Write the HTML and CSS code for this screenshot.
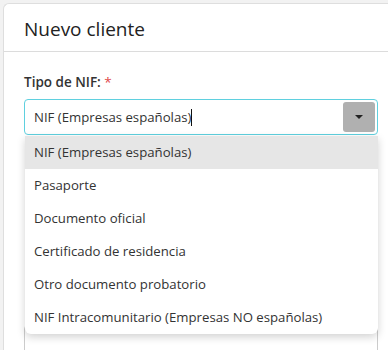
FILE: index.html
```html
<!DOCTYPE html>
<html lang="es">
<head>
    <meta charset="UTF-8">
    <meta name="viewport" content="width=device-width, initial-scale=1.0">
    <title>Nuevo cliente</title>
    <link rel="stylesheet" href="styles.css">
</head>
<body>
    <div class="card">
        <div class="card-header">Nuevo cliente</div>
        <div class="card-body">
            <label class="field-label">Tipo de NIF: <span class="req">*</span></label>
            <div class="select-wrap">
                <div class="select-box">
                    <span class="select-value">NIF (Empresas españolas)</span><span class="caret-cursor"></span>
                    <span class="select-btn">
                        <svg width="10" height="6" viewBox="0 0 10 6"><path d="M1 1h8L5 5z" fill="#222"/></svg>
                    </span>
                </div>
                <ul class="select-menu">
                    <li class="active">NIF (Empresas españolas)</li>
                    <li>Pasaporte</li>
                    <li>Documento oficial</li>
                    <li>Certificado de residencia</li>
                    <li>Otro documento probatorio</li>
                    <li>NIF Intracomunitario (Empresas NO españolas)</li>
                </ul>
            </div>
            <div class="next-input"></div>
        </div>
    </div>
</body>
</html>
```

FILE: styles.css
```css
body {
    margin: 0;
    padding: 3px 0 0 3px;
    background: #f2f2f2;
    font-family: "Open Sans", "Noto Sans", sans-serif;
    color: #212529;
    overflow: hidden;
}
.card {
    background: #fff;
    border: 1px solid #dedede;
    border-right: none;
    border-radius: 6px 0 0 0;
    height: 400px;
}
.card-header {
    height: 48px;
    box-sizing: border-box;
    padding: 12px 20px 0;
    font-size: 19px;
    color: #222;
    border-bottom: 1px solid #dcdcdc;
}
.card-body {
    padding: 21px 10px 0 20px;
}
.field-label {
    display: block;
    font-size: 13.5px;
    font-weight: 600;
    color: #333;
    margin-bottom: 8px;
}
.req {
    color: #e04848;
    font-weight: 400;
}
.select-wrap {
    position: relative;
}
.select-box {
    display: flex;
    align-items: center;
    height: 36px;
    box-sizing: border-box;
    border: 1px solid #5fd0df;
    border-radius: 4px;
    padding: 0 2px 0 9px;
    font-size: 13.2px;
    color: #333;
}
.caret-cursor {
    display: inline-block;
    width: 1px;
    height: 17px;
    background: #111;
}
.select-btn {
    margin-left: auto;
    width: 32px;
    height: 30px;
    background: #b0b0b0;
    border-radius: 3px;
    display: flex;
    align-items: center;
    justify-content: center;
}
.select-menu {
    position: absolute;
    top: 37px;
    left: 1px;
    right: 0;
    margin: 0;
    padding: 0;
    list-style: none;
    background: #fff;
    border-radius: 0 0 6px 6px;
    box-shadow: 0 3px 8px rgba(0, 0, 0, 0.18);
    font-size: 13.2px;
    color: #333;
}
.select-menu li {
    height: 33px;
    line-height: 33px;
    padding-left: 9px;
}
.select-menu li.active {
    background: #e6e6e6;
}
.next-input {
    margin-top: 190px;
    height: 36px;
    border: 1px solid #ccc;
    border-radius: 4px;
}
```
